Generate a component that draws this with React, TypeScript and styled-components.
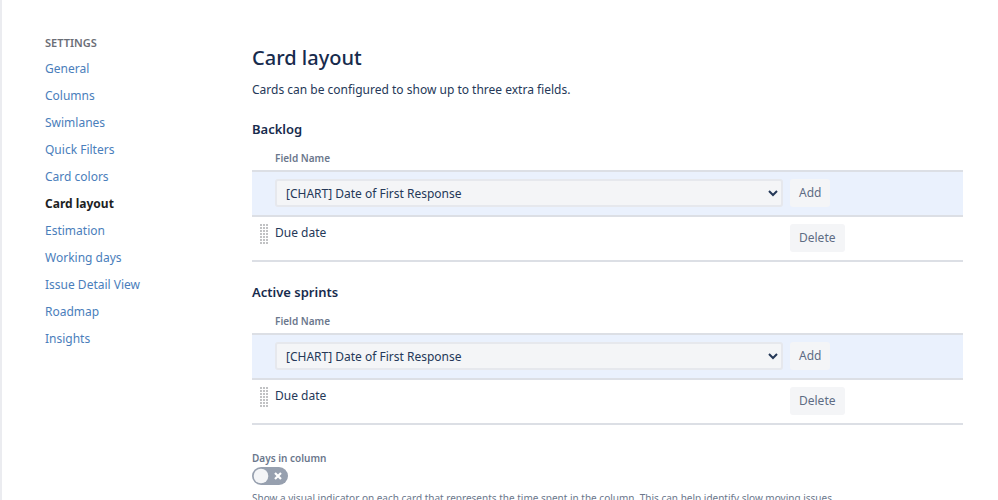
import React, { useState } from "react";
import styled, { createGlobalStyle } from "styled-components";

const GlobalStyle = createGlobalStyle`
  *, *::before, *::after { box-sizing: border-box; }
  body {
    margin: 0;
    background: #fff;
    color: #253858;
    font-family: "Noto Sans", "Open Sans", sans-serif;
    font-size: 12px;
    line-height: 18px;
  }
  button, select, input { font: inherit; }
`;

const Page = styled.div`
  display: flex;
  height: 100vh;
  overflow: hidden;
  border-left: 2px solid #ebecf0;
`;

const Sidebar = styled.nav`
  flex: none;
  width: 250px;
  padding: 34px 24px 0 43px;
`;

const SidebarTitle = styled.h2`
  margin: 0 0 3px;
  font-size: 11px;
  line-height: 18px;
  font-weight: 600;
  color: #6b6e76;
  text-transform: uppercase;
`;

const NavList = styled.ul`
  margin: 0;
  padding: 0;
  list-style: none;
`;

const NavLink = styled.a<{ $active: boolean }>`
  display: block;
  line-height: 27px;
  text-decoration: none;
  color: ${(p) => (p.$active ? "#1d1f24" : "#4a7ebb")};
  font-weight: ${(p) => (p.$active ? 700 : 400)};
`;

const Main = styled.main`
  flex: 1;
  min-width: 0;
  padding: 44px 35px 0 0;
`;

const Title = styled.h1`
  margin: 0;
  font-size: 20px;
  line-height: 28px;
  font-weight: 500;
  color: #172b4d;
`;

const Intro = styled.p`
  margin: 9px 0 0;
`;

const Section = styled.section`
  margin-top: 18px;
`;

const SwitchSection = styled.section`
  margin-top: 24px;
`;

const SectionTitle = styled.h3`
  margin: 0;
  font-size: 13px;
  line-height: 24px;
  font-weight: 600;
  color: #172b4d;
`;

const FieldTable = styled.table`
  width: 100%;
  border-collapse: collapse;
  table-layout: fixed;
`;

const HeadCell = styled.th<{ $width?: string }>`
  width: ${(p) => p.$width ?? "auto"};
  height: 30px;
  padding: 5px 0 0;
  text-align: left;
  font-size: 10px;
  font-weight: 600;
  color: #6b778c;
`;

const Row = styled.tr<{ $highlight?: boolean }>`
  background: ${(p) => (p.$highlight ? "#eaf1fd" : "transparent")};
  border-top: 2px solid #dcdfe5;
  border-bottom: 2px solid #dcdfe5;
`;

const Cell = styled.td`
  height: 45px;
  padding: 7px 7px 0 0;
  vertical-align: top;
`;

const HandleCell = styled(Cell)`
  padding: 7px 0 0 8px;
`;

const Select = styled.select`
  display: block;
  width: 100%;
  height: 28px;
  padding: 0 0 0 5px;
  border: 2px solid #e6e8ed;
  border-radius: 3px;
  background: #f4f5f7;
  color: #253858;
`;

const Button = styled.button`
  display: block;
  height: 28px;
  padding: 0 9px;
  border: 0;
  border-radius: 3px;
  background: #f4f5f7;
  color: #5e6c84;
  cursor: pointer;
`;

const SwitchLabel = styled.label`
  display: block;
  width: max-content;
  font-size: 10px;
  font-weight: 600;
  color: #6b778c;
`;

const Switch = styled.span`
  position: relative;
  display: block;
  width: 36px;
  height: 18px;

  input {
    position: absolute;
    inset: 0;
    width: 100%;
    height: 100%;
    margin: 0;
    opacity: 0;
    cursor: pointer;
  }

  svg { display: block; }
`;

const Help = styled.p`
  margin: 4px 0 24px;
  font-size: 10px;
  color: #6b778c;
`;

const navItems = [
  "General",
  "Columns",
  "Swimlanes",
  "Quick Filters",
  "Card colors",
  "Card layout",
  "Estimation",
  "Working days",
  "Issue Detail View",
  "Roadmap",
  "Insights",
];

function DragHandle() {
  const columns = [0, 3, 6];
  const rows = [0, 3, 6, 9, 12, 15, 18];
  return (
    <svg width="8" height="21" viewBox="0 0 8 21" aria-hidden="true">
      {rows.map((y) =>
        columns.map((x) => (
          <rect key={`${x}-${y}`} x={x} y={y} width="2" height="2" fill="#c1c2c4" />
        ))
      )}
    </svg>
  );
}

function FieldSection({ title }: { title: string }) {
  return (
    <Section>
      <SectionTitle>{title}</SectionTitle>
      <FieldTable>
        <thead>
          <tr>
            <HeadCell $width="23px" aria-label="Reorder" />
            <HeadCell $width="515px" scope="col">Field Name</HeadCell>
            <HeadCell aria-label="Actions" />
          </tr>
        </thead>
        <tbody>
          <Row $highlight>
            <Cell />
            <Cell>
              <Select aria-label={`${title} field`}>
                <option>[CHART] Date of First Response</option>
              </Select>
            </Cell>
            <Cell>
              <Button type="button">Add</Button>
            </Cell>
          </Row>
          <Row>
            <HandleCell>
              <DragHandle />
            </HandleCell>
            <Cell>Due date</Cell>
            <Cell>
              <Button type="button">Delete</Button>
            </Cell>
          </Row>
        </tbody>
      </FieldTable>
    </Section>
  );
}

function Toggle({ id }: { id: string }) {
  const [on, setOn] = useState(false);
  return (
    <Switch>
      <svg width="36" height="18" viewBox="0 0 36 18" aria-hidden="true">
        <rect width="36" height="18" rx="9" fill={on ? "#36b37e" : "#97a0af"} />
        <circle cx={on ? 27 : 9} cy="9" r="7.3" fill="#f4f5f7" />
        {on ? (
          <path d="M7 9l3 3 5-6" fill="none" stroke="#fff" strokeWidth="2" />
        ) : (
          <path d="M23 6l6 6M29 6l-6 6" stroke="#fff" strokeWidth="2.2" />
        )}
      </svg>
      <input
        id={id}
        type="checkbox"
        checked={on}
        onChange={(e) => setOn(e.target.checked)}
      />
    </Switch>
  );
}

export default function App() {
  return (
    <>
      <GlobalStyle />
      <Page>
        <Sidebar aria-label="Settings">
          <SidebarTitle>Settings</SidebarTitle>
          <NavList>
            {navItems.map((item) => (
              <li key={item}>
                <NavLink href="#" $active={item === "Card layout"}>
                  {item}
                </NavLink>
              </li>
            ))}
          </NavList>
        </Sidebar>
        <Main>
          <Title>Card layout</Title>
          <Intro>Cards can be configured to show up to three extra fields.</Intro>
          <FieldSection title="Backlog" />
          <FieldSection title="Active sprints" />
          <SwitchSection>
            <SwitchLabel htmlFor="days-in-column">Days in column</SwitchLabel>
            <Toggle id="days-in-column" />
            <Help>
              Show a visual indicator on each card that represents the time spent in the
              column. This can help identify slow moving issues.
            </Help>
          </SwitchSection>
        </Main>
      </Page>
    </>
  );
}
